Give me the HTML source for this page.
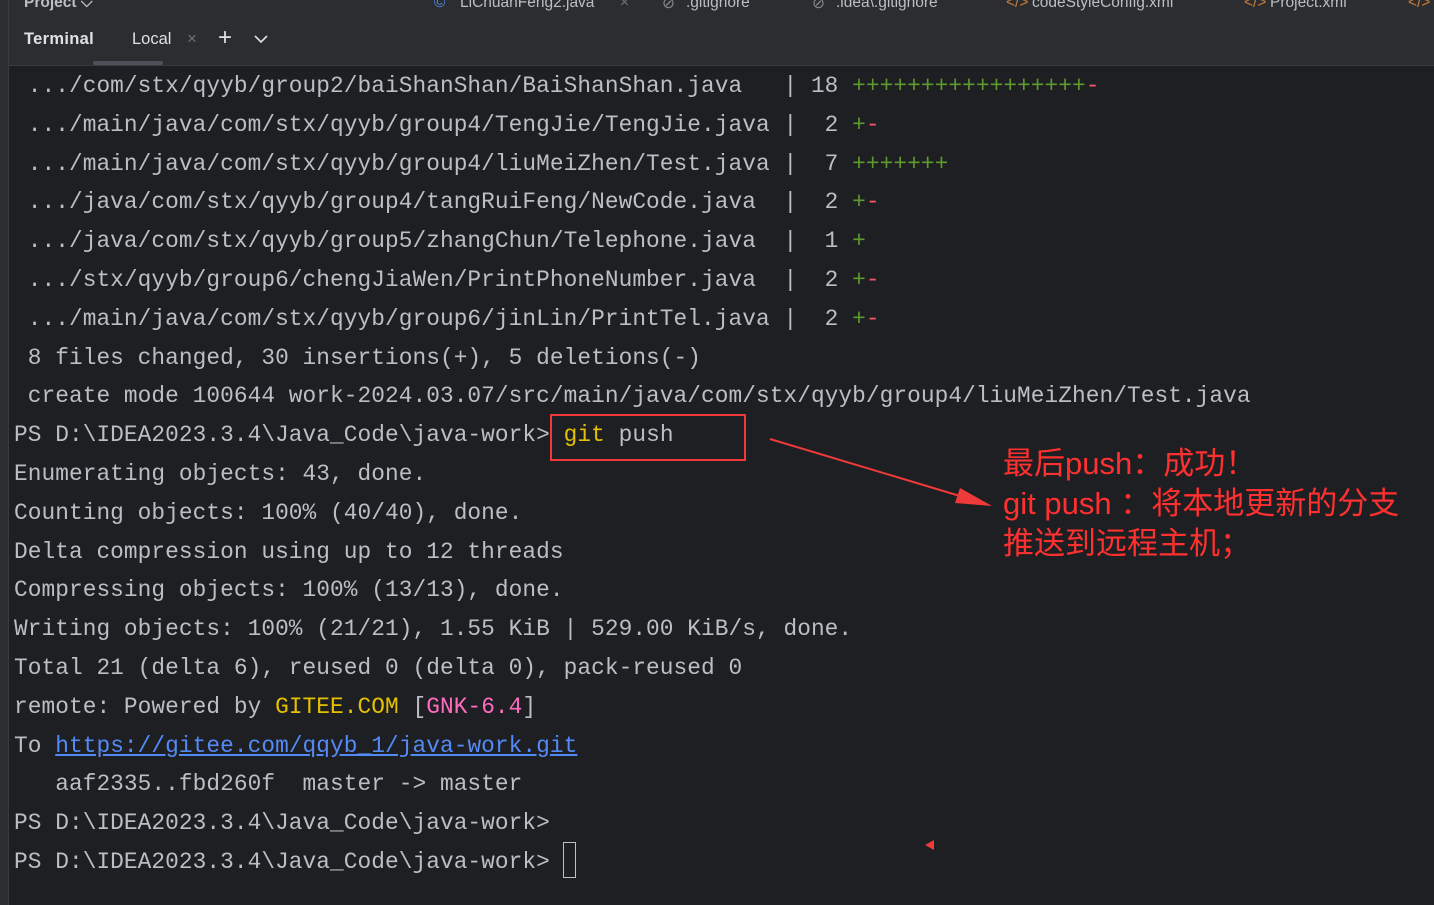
<!DOCTYPE html>
<html><head><meta charset="utf-8"><style>
body{margin:0;width:1434px;height:905px;background:#1e1f22;overflow:hidden;position:relative;font-family:"Liberation Sans",sans-serif}
.top{position:absolute;left:0;top:0;width:1434px;height:13px;background:#2b2d30}
.top span{position:absolute;top:-6px;font-size:15.5px;color:#bcbec4;white-space:nowrap}
.hdr{position:absolute;left:8px;top:13px;width:1426px;height:52px;background:#2b2d30;border-bottom:1px solid #393b40}
.leftbar{position:absolute;left:0;top:0;width:8px;height:905px;background:#2b2d30;border-right:1px solid #393b40}
.term{position:absolute;left:14px;top:67px;margin:0;font-family:"Liberation Mono",monospace;font-size:22.8px;letter-spacing:0.06px;line-height:38.8px;color:#bcbec4;white-space:pre}
.g{color:#5f9a2e}.r{color:#f75464}.y{color:#e5c000}.p{color:#ff6bc1}.l{color:#548af7;text-decoration:underline}
.ann{position:absolute;left:1003px;top:444px;color:#ff3030;font-family:"Liberation Sans","Noto Sans CJK SC",sans-serif;font-size:31px;line-height:40px;white-space:nowrap}
</style></head><body>
<div class="top">
<span style="left:24px;font-weight:bold">Project ⌵</span>
<span style="left:434px;color:#548af7">©</span><span style="left:460px">LiChuanFeng2.java</span><span style="left:620px;color:#6f737a">×</span>
<span style="left:662px;color:#888">⊘</span><span style="left:686px">.gitignore</span>
<span style="left:812px;color:#888">⊘</span><span style="left:836px">.idea\.gitignore</span>
<span style="left:1006px;color:#c77a3c">&lt;/&gt;</span><span style="left:1032px">codeStyleConfig.xml</span>
<span style="left:1244px;color:#c77a3c">&lt;/&gt;</span><span style="left:1270px">Project.xml</span>
<span style="left:1408px;color:#c77a3c">&lt;/&gt;</span>
</div>
<div class="hdr">
<span style="position:absolute;left:16px;top:17px;font-size:16.5px;color:#dfe1e5;font-weight:bold;letter-spacing:0.3px">Terminal</span>
<span style="position:absolute;left:124px;top:17px;font-size:16.5px;color:#dfe1e5">Local</span>
<span style="position:absolute;left:179px;top:16px;font-size:17px;color:#6f737a">×</span>
<span style="position:absolute;left:210px;top:11px;font-size:24px;color:#dfe1e5;font-weight:300">+</span>
<svg style="position:absolute;left:246px;top:22px" width="14" height="9"><path d="M1 1 L7 7 L13 1" stroke="#dfe1e5" stroke-width="1.6" fill="none"/></svg>
<div style="position:absolute;left:85px;top:48px;width:70px;height:4px;background:#4e5157;border-radius:2px"></div>
</div>
<div class="leftbar"></div>
<pre class="term"> .../com/stx/qyyb/group2/baiShanShan/BaiShanShan.java   | 18 <span class="g">+++++++++++++++++</span><span class="r">-</span>
 .../main/java/com/stx/qyyb/group4/TengJie/TengJie.java |  2 <span class="g">+</span><span class="r">-</span>
 .../main/java/com/stx/qyyb/group4/liuMeiZhen/Test.java |  7 <span class="g">+++++++</span>
 .../java/com/stx/qyyb/group4/tangRuiFeng/NewCode.java  |  2 <span class="g">+</span><span class="r">-</span>
 .../java/com/stx/qyyb/group5/zhangChun/Telephone.java  |  1 <span class="g">+</span>
 .../stx/qyyb/group6/chengJiaWen/PrintPhoneNumber.java  |  2 <span class="g">+</span><span class="r">-</span>
 .../main/java/com/stx/qyyb/group6/jinLin/PrintTel.java |  2 <span class="g">+</span><span class="r">-</span>
 8 files changed, 30 insertions(+), 5 deletions(-)
 create mode 100644 work-2024.03.07/src/main/java/com/stx/qyyb/group4/liuMeiZhen/Test.java
PS D:\IDEA2023.3.4\Java_Code\java-work&gt; <span class="y">git</span> push
Enumerating objects: 43, done.
Counting objects: 100% (40/40), done.
Delta compression using up to 12 threads
Compressing objects: 100% (13/13), done.
Writing objects: 100% (21/21), 1.55 KiB | 529.00 KiB/s, done.
Total 21 (delta 6), reused 0 (delta 0), pack-reused 0
remote: Powered by <span class="y">GITEE.COM</span> [<span class="p">GNK-6.4</span>]
To <span class="l">https://gitee.com/qqyb_1/java-work.git</span>
   aaf2335..fbd260f  master -&gt; master
PS D:\IDEA2023.3.4\Java_Code\java-work&gt;
PS D:\IDEA2023.3.4\Java_Code\java-work&gt; </pre>
<div style="position:absolute;left:563px;top:842px;width:13px;height:36px;border:1.5px solid #bcbec4;box-sizing:border-box"></div>
<div style="position:absolute;left:550px;top:414px;width:196px;height:47px;border:2.5px solid #f03a3a;box-sizing:border-box"></div>
<svg style="position:absolute;left:0;top:0" width="1434" height="905">
<line x1="770" y1="439" x2="970" y2="499" stroke="#f03a3a" stroke-width="2"/>
<polygon points="992,506 960,488 955,503" fill="#f03a3a"/>
<polygon points="925,845 934,840 934,850" fill="#f03a3a"/>
</svg>
<div class="ann">最后push：成功！<br>git push ：将本地更新的分支<br>推送到远程主机；</div>
</body></html>
